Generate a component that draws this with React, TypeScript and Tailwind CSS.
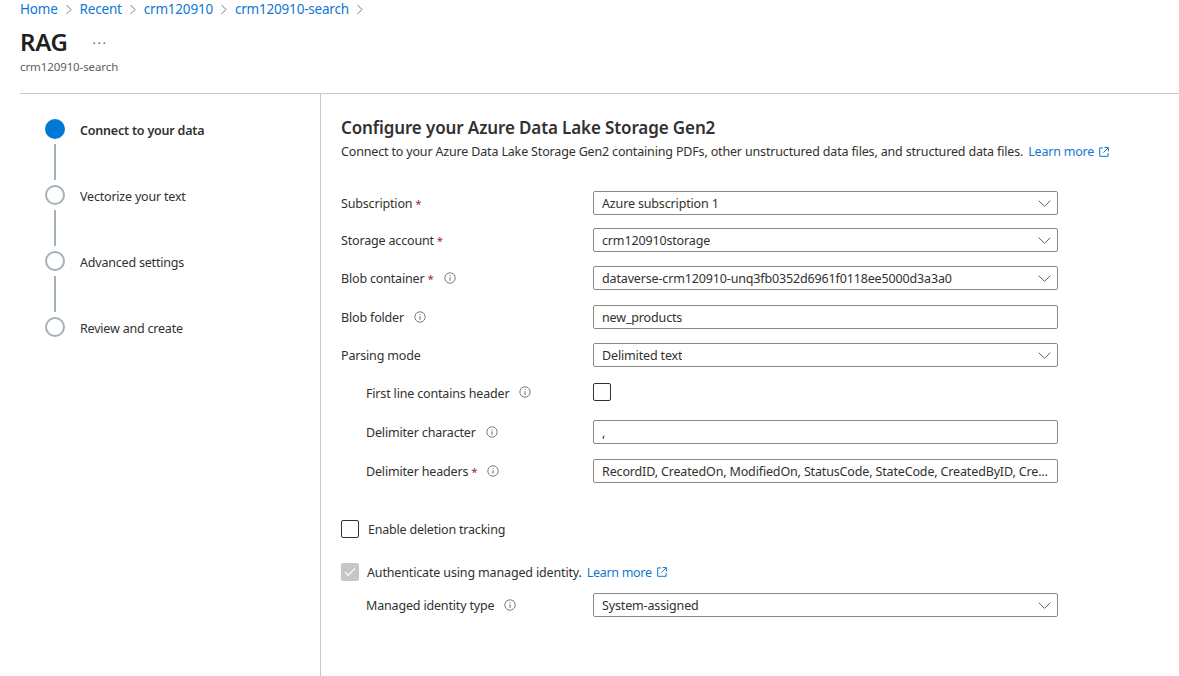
import React from "react";

const FONT = "font-['Noto_Sans','Open_Sans',sans-serif]";

function Info() {
  return (
    <svg width="12" height="12" viewBox="0 0 12 12" fill="none" className="shrink-0">
      <circle cx="6" cy="6" r="5.2" stroke="#6b6b6b" strokeWidth="0.9" />
      <path d="M6 5.2V8.8" stroke="#6b6b6b" strokeWidth="1" />
      <path d="M6 3.2V4.2" stroke="#6b6b6b" strokeWidth="1" />
    </svg>
  );
}

function External() {
  return (
    <svg width="10" height="10" viewBox="0 0 10 10" fill="none" className="shrink-0">
      <path d="M4 .9H.7v8.4h8.4V6" stroke="#0f78d4" strokeWidth="1" />
      <path d="M5.6.6h3.8v3.8M9.2.8 4.4 5.6" stroke="#0f78d4" strokeWidth="1" />
    </svg>
  );
}

function Chevron() {
  return (
    <svg width="13" height="7" viewBox="0 0 13 7" fill="none" className="shrink-0 mt-[1px]">
      <path d="M.7.7l5.8 5.6L12.3.7" stroke="#605e5c" strokeWidth="1" />
    </svg>
  );
}

function Crumb({ children }: { children: React.ReactNode }) {
  return <a className="text-[#0f78d4] text-[13.5px] tracking-[-0.2px]">{children}</a>;
}

function Sep() {
  return (
    <svg width="8" height="11" viewBox="0 0 8 11" fill="none" className="shrink-0 mx-[7px]">
      <path d="M1.5 1l4.5 4.5L1.5 10" stroke="#7a7a7a" strokeWidth="1" />
    </svg>
  );
}

function Req() {
  return <span className="text-[#a4262c] ml-[3px] text-[11.5px]">*</span>;
}

function Field({ value, select }: { value: string; select?: boolean }) {
  return (
    <div className="w-[465px] h-[24px] border border-[#8a8886] rounded-[2px] flex items-center justify-between pl-[8px] pr-[6px] bg-white">
      <span className="truncate pt-[2px] text-[12.5px] leading-[16px] tracking-[-0.15px] text-[#323130]">{value}</span>
      {select && <Chevron />}
    </div>
  );
}

function Row({
  label,
  req,
  info,
  indent,
  mt,
  labelPad = "pt-[2px]",
  children,
}: {
  label: string;
  req?: boolean;
  info?: boolean;
  indent?: boolean;
  mt: string;
  labelPad?: string;
  children: React.ReactNode;
}) {
  return (
    <div className={`flex items-center ${mt}`}>
      <div className={`w-[252px] h-[18px] flex items-center text-[12.5px] leading-[16px] tracking-[-0.17px] text-[#323130] ${indent ? "pl-[25px]" : ""}`}>
        <span className={labelPad}>{label}</span>
        {req && <span className="pt-[2px] flex"><Req /></span>}
        {info && <span className="ml-[10px] flex"><Info /></span>}
      </div>
      {children}
    </div>
  );
}

function Step({ label, active, last }: { label: string; active?: boolean; last?: boolean }) {
  return (
    <div className="flex">
      <div className="w-[20px] flex flex-col items-center">
        <div
          className={
            active
              ? "w-[20px] h-[20px] rounded-full bg-[#0078d4]"
              : "w-[20px] h-[20px] rounded-full border-2 border-[#a3b2b8] bg-white"
          }
        />
        {!last && <div className="w-[2px] h-[36px] mt-[5px] mb-[5px] bg-[#a3b2b8]" />}
      </div>
      <div
        className={`ml-[15px] h-[20px] pt-[4px] flex items-center text-[12.5px] tracking-[-0.2px] text-[#323130] ${active ? "font-semibold" : ""}`}
      >
        {label}
      </div>
    </div>
  );
}

export default function App() {
  return (
    <div className={`w-[1179px] h-[676px] overflow-hidden bg-white flex flex-col ${FONT}`}>
      <div className="h-[93px] shrink-0 ml-[20px] border-b border-[#c8c8c8] box-content">
        <div className="flex items-center h-[19px]">
          <Crumb>Home</Crumb>
          <Sep />
          <Crumb>Recent</Crumb>
          <Sep />
          <Crumb>crm120910</Crumb>
          <Sep />
          <Crumb>crm120910-search</Crumb>
          <Sep />
        </div>
        <div className="flex items-center mt-[7px] h-[32px]">
          <span className="text-[24px] font-semibold tracking-[-0.3px] text-[#201f1e] leading-[32px]">RAG</span>
          <span className="ml-[25px] text-[13px] leading-none text-[#605e5c] tracking-[1.5px] mt-[2px]">···</span>
        </div>
        <div className="text-[11.5px] tracking-[-0.1px] text-[#605e5c] mt-[1px] leading-[16px]">crm120910-search</div>
      </div>

      <div className="flex flex-1 min-h-0">
        <div className="w-[301px] ml-[20px] shrink-0 border-r border-[#c8c8c8] pl-[25px] pt-[25px]">
          <Step label="Connect to your data" active />
          <Step label="Vectorize your text" />
          <Step label="Advanced settings" />
          <Step label="Review and create" last />
        </div>

        <div className="pl-[20px] pt-[23px]">
          <h1 className="text-[17px] font-semibold tracking-[-0.12px] leading-[22px] text-[#323130]">
            Configure your Azure Data Lake Storage Gen2
          </h1>
          <div className="mt-[4px] flex items-center text-[12.5px] tracking-[-0.165px] leading-[18px] text-[#323130]">
            <span>
              Connect to your Azure Data Lake Storage Gen2 containing PDFs, other unstructured data files, and structured data files.
            </span>
            <span className="ml-[5px] tracking-[-0.2px] text-[#0f78d4]">Learn more</span>
            <span className="ml-[5px] flex"><External /></span>
          </div>

          <Row label="Subscription" req mt="mt-[30px]"><Field value="Azure subscription 1" select /></Row>
          <Row label="Storage account" req mt="mt-[13px]"><Field value="crm120910storage" select /></Row>
          <Row label="Blob container" req info mt="mt-[14px]"><Field value="dataverse-crm120910-unq3fb0352d6961f0118ee5000d3a3a0" select /></Row>
          <Row label="Blob folder" info mt="mt-[15px]"><Field value="new_products" /></Row>
          <Row label="Parsing mode" mt="mt-[14px]"><Field value="Delimited text" select /></Row>
          <Row label="First line contains header" info indent labelPad="pt-[4px]" mt="mt-[16px]">
            <div className="w-[18px] h-[18px] border border-[#323130] rounded-[2px]" />
          </Row>
          <Row label="Delimiter character" info indent mt="mt-[19px]"><Field value="," /></Row>
          <Row label="Delimiter headers" req info indent mt="mt-[15px]">
            <Field value="RecordID, CreatedOn, ModifiedOn, StatusCode, StateCode, CreatedByID, Cre..." />
          </Row>

          <div className="flex items-center mt-[37px] text-[12.5px] leading-[16px] tracking-[-0.2px] text-[#323130]">
            <div className="w-[18px] h-[18px] border border-[#323130] rounded-[2px]" />
            <span className="ml-[9px] pt-[2px]">Enable deletion tracking</span>
          </div>

          <div className="flex items-center mt-[24px] text-[12.5px] leading-[16px] tracking-[-0.15px] text-[#323130]">
            <div className="w-[18px] h-[18px] rounded-[2px] bg-[#c8c6c4] flex items-center justify-center">
              <svg width="12" height="10" viewBox="0 0 12 10" fill="none">
                <path d="M1 5.2 4.2 8.4 11 1.4" stroke="#ffffff" strokeWidth="1.2" />
              </svg>
            </div>
            <span className="ml-[8px] pt-[3px]">Authenticate using managed identity.</span>
            <span className="ml-[5px] pt-[3px] tracking-[-0.3px] text-[#0f78d4]">Learn more</span>
            <span className="ml-[5px] flex"><External /></span>
          </div>

          <Row label="Managed identity type" info indent labelPad="pt-[1px]" mt="mt-[12px]"><Field value="System-assigned" select /></Row>
        </div>
      </div>
    </div>
  );
}
